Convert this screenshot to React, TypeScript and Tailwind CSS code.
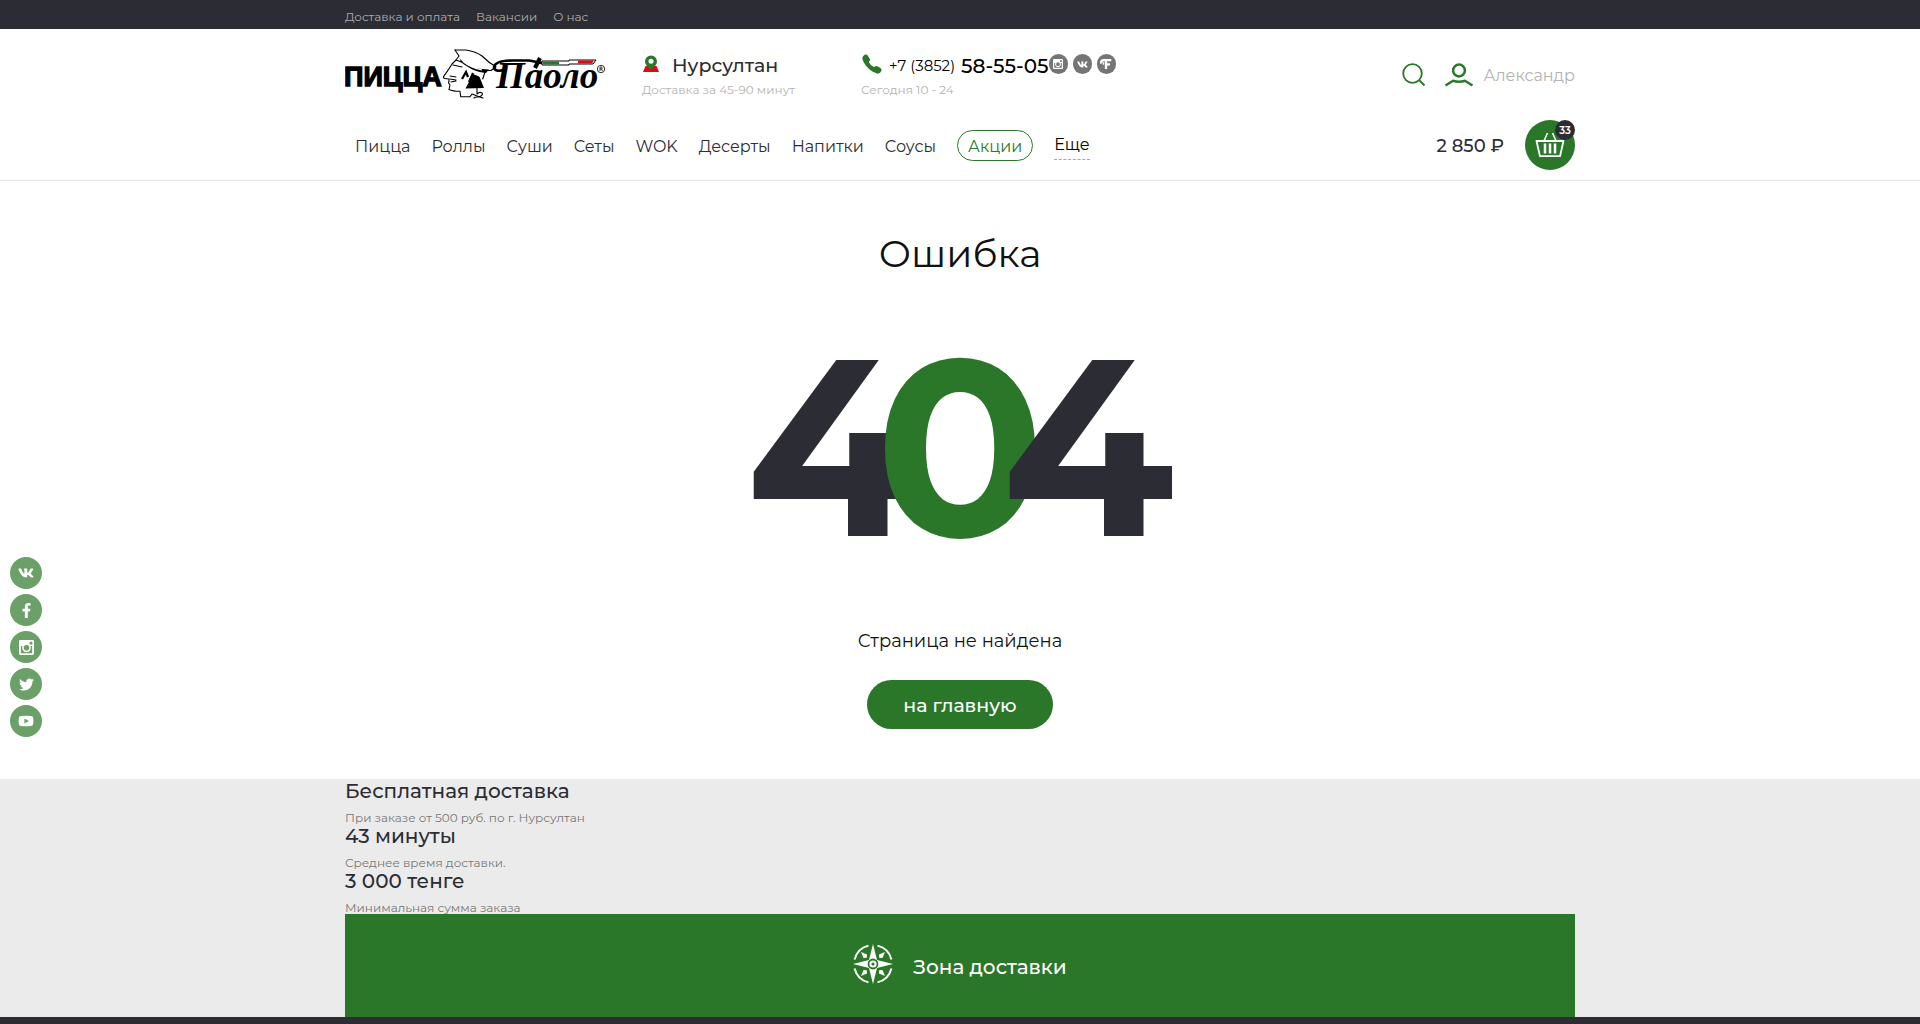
import type { ReactNode } from "react";
import { FaFacebookF, FaTwitter, FaVk } from "react-icons/fa";
import { IoCall } from "react-icons/io5";

function InstagramIcon({ size }: { size: number }) {
  return (
    <svg width={size} height={size} viewBox="0 0 16 16" aria-hidden="true">
      <path
        fillRule="evenodd"
        fill="currentColor"
        d="M1.5 0h13A1.5 1.5 0 0 1 16 1.5v13a1.5 1.5 0 0 1-1.5 1.5h-13A1.5 1.5 0 0 1 0 14.500v-13A1.500 1.500 0 0 1 1.500 0ZM11.300 1.800v3h3v-3ZM2 6.500V14h12V6.500h-1.700a4.700 4.700 0 1 1-8.600 0ZM8 5.200a3 3 0 1 0 0 6 3 3 0 0 0 0-6Z"
      />
    </svg>
  );
}

function YoutubeIcon() {
  return (
    <svg width="16" height="12" viewBox="0 0 16 12" aria-hidden="true">
      <path
        fillRule="evenodd"
        fill="currentColor"
        d="M3 1Q8 .5 13 1Q15 1.200 15.200 3Q15.600 6 15.200 9Q15 10.800 13 11Q8 11.500 3 11Q1 10.800.8 9Q.4 6 .8 3Q1 1.200 3 1ZM6.400 3.400v5.200L11 6Z"
      />
    </svg>
  );
}

function FlampIcon() {
  return (
    <svg width="12" height="11" viewBox="0 0 12 11" aria-hidden="true">
      <path
        d="M1.500 4.500C.5 2.500 1.800 1.200 4 1.200H11.300M6 1.500V10M6 5.400H10"
        stroke="currentColor"
        strokeWidth="2.300"
        fill="none"
      />
      <path d="M3.500 3.200v2.500" stroke="currentColor" strokeWidth="1.500" />
    </svg>
  );
}

function Logo() {
  return (
    <svg width="262" height="54" viewBox="0 0 262 54" role="img" aria-label="Пицца Паоло">
      <text x="-1" y="38" fontFamily="'Liberation Sans', sans-serif" fontSize="27" fontWeight="700" stroke="#000" strokeWidth="1.300">
        ПИЦЦА
      </text>
      <path d="M107 16L98 29L104 32L105 42L115 43L126 46L138 40L141 22L112 11Z" fill="#fff" />
      <g fill="none" stroke="#000" strokeWidth="1.100" strokeLinejoin="round" strokeLinecap="round">
        <path d="M110 2H121C128 3 133 5 137 8C142 13 146 16 151 18.700L146 22.500H142" fill="#fff" />
        <path d="M110 2L114 8L111 12L107 16C104 21 101 25 98.300 29C98 30.500 101 31 104 31L104 33L103.500 35L105 37L104 41.500C107 43 111 43.300 115 43.300L115.700 48.700H125L127 46L134 48.700L138 50" />
        <path d="M111 12L119 15M108 17L117 19M105 28L111 29M105 31L111 32M106 34L111 33" />
        <path d="M132 40V46C135 43 140 45 136 48C133 50 131 48 129 50M140 24L137.700 31" />
      </g>
      <path d="M113 6C114 13 124 19 131 20.500L144 21.500L141 25C131 24 123 20 116 14Z" fill="#000" />
      <path d="M118 13.500C123 17.500 130 20.500 137 22" stroke="#fff" strokeWidth="1.200" fill="none" />
      <path d="M128 26C131 28 134 27 135 30L139 40L120.500 40.500L124 34Z" fill="#000" />
      <path d="M117 31L121 24L123 29M124 34L128 25" stroke="#000" strokeWidth="2.200" fill="none" />
      <text x="151" y="40" fontFamily="'Liberation Serif', serif" fontSize="37" fontStyle="italic" fontWeight="700">
        Паоло
      </text>
      <path d="M161 21C154 24 149 23 149 19C150 14 158 12.500 168 12.500H184C190 13 192 15 198 15" stroke="#000" strokeWidth="2.600" fill="none" strokeLinecap="round" />
      <path d="M190 20L195 10" stroke="#000" strokeWidth="4" />
      <path d="M197 13H224V12H251L248 16H224V17H197Z" fill="#fff" stroke="#000" strokeWidth="1" />
      <path d="M198 13.500H214V16.500H198Z" fill="#2b7729" />
      <path d="M233 12.500H249L247 15.500H233Z" fill="#e30613" />
      <circle cx="256" cy="21" r="3.700" fill="none" stroke="#000" strokeWidth=".8" />
      <path d="M255 23V19H256.500Q258 20 256.500 21H255M256.500 21L257.500 23" fill="none" stroke="#000" strokeWidth=".8" />
    </svg>
  );
}

function PinIcon() {
  return (
    <svg width="18" height="18" viewBox="0 0 18 18" aria-hidden="true">
      <path d="M3.500 11H14.500L17 17H1Z" fill="#e30613" />
      <path d="M9 .5A6 6 0 0 0 3 6.500C3 9.500 6 12 9 15C12 12 15 9.500 15 6.500A6 6 0 0 0 9 .5Z" fill="#2b7729" />
      <circle cx="9" cy="6.200" r="2.500" fill="#fff" />
    </svg>
  );
}

function SearchIcon() {
  return (
    <svg width="24" height="24" viewBox="0 0 24 24" fill="none" stroke="#2b7729" strokeWidth="1.800" aria-hidden="true">
      <circle cx="10.500" cy="10.500" r="9.300" />
      <path d="M17 17L22.500 22.500" />
    </svg>
  );
}

function UserIcon() {
  return (
    <svg width="30" height="24" viewBox="0 0 30 24" fill="none" stroke="#2b7729" aria-hidden="true">
      <circle cx="15" cy="7.500" r="5.900" strokeWidth="2.500" />
      <path d="M1.500 22.500L9 17.800Q15 19.800 21 17.800L28.500 22.500" strokeWidth="2.500" />
    </svg>
  );
}

function BasketIcon() {
  return (
    <svg width="30" height="26" viewBox="0 0 30 26" fill="none" stroke="#fff" aria-hidden="true">
      <path d="M1.500 9H28.500L25 24.200H5Z" strokeWidth="1.800" strokeLinejoin="round" />
      <path d="M8.500 10L12.500 1M21.500 10L17.500 1" strokeWidth="1.500" />
      <path d="M10 11.500V21.500M15 11.500V21.500M20 11.500V21.500" strokeWidth="2.500" />
    </svg>
  );
}

function CompassIcon() {
  return (
    <svg width="40" height="40" viewBox="0 0 40 40" fill="#fff" aria-hidden="true">
      <g fill="none" stroke="#fff" strokeWidth="2">
        <path d="M24.500 1.600A19 19 0 0 1 38.400 15.500M38.400 24.500A19 19 0 0 1 24.500 38.400M15.500 38.400A19 19 0 0 1 1.600 24.500M1.600 15.500A19 19 0 0 1 15.500 1.600" />
      </g>
      <path d="M20 0L24 16L40 20L24 24L20 40L16 24L0 20L16 16Z" />
      <path d="M8 8L14 10.500L13.800 13.800L10.500 14ZM32 8L26 10.500L26.200 13.800L29.500 14ZM8 32L14 29.500L13.800 26.200L10.500 26ZM32 32L26 29.500L26.200 26.200L29.500 26Z" />
      <circle cx="20" cy="20" r="4.500" fill="none" stroke="#2b7729" strokeWidth="1.800" />
      <circle cx="20" cy="20" r="1.600" fill="#2b7729" />
    </svg>
  );
}

const categories = ["Пицца", "Роллы", "Суши", "Сеты", "WOK", "Десерты", "Напитки", "Соусы"];

const facts = [
  { title: "Бесплатная доставка", note: "При заказе от 500 руб. по г. Нурсултан" },
  { title: "43 минуты", note: "Среднее время доставки." },
  { title: "3 000 тенге", note: "Минимальная сумма заказа" },
];

const shareLinks: { name: string; icon: ReactNode }[] = [
  { name: "ВКонтакте", icon: <FaVk size={16} /> },
  { name: "Facebook", icon: <FaFacebookF size={15} /> },
  { name: "Instagram", icon: <InstagramIcon size={15} /> },
  { name: "Twitter", icon: <FaTwitter size={15} /> },
  { name: "YouTube", icon: <YoutubeIcon /> },
];

const headerLinks: { name: string; icon: ReactNode }[] = [
  { name: "Instagram", icon: <InstagramIcon size={10} /> },
  { name: "ВКонтакте", icon: <FaVk size={11} /> },
  { name: "Flamp", icon: <FlampIcon /> },
];

export default function App() {
  return (
    <div className="flex min-h-screen flex-col bg-white font-['Montserrat','Inter',sans-serif] text-[#2c2c34]">
      <div className="bg-[#2c2c34]">
        <nav className="mx-auto flex h-[29px] w-full max-w-[1230px] items-center gap-4 pt-1 text-[12px] text-[#adadad]">
          <a href="#delivery">Доставка и оплата</a>
          <a href="#jobs">Вакансии</a>
          <a href="#about">О нас</a>
        </nav>
      </div>

      <header className="border-b border-[#e6e6e6]">
        <div className="mx-auto w-full max-w-[1230px]">
          <div className="flex h-[91px] items-start pt-[19px]">
            <a href="#home" className="w-[297px]">
              <Logo />
            </a>
            <div className="w-[219px]">
              <a href="#city" className="flex h-8 items-center gap-3 text-[19px] font-medium">
                <PinIcon />
                <span className="pt-1">Нурсултан</span>
              </a>
              <p className="pt-0.5 text-[12px] leading-4 text-[#b3b3b3]">Доставка за 45-90 минут</p>
            </div>
            <div>
              <div className="flex h-8 items-center">
                <a href="tel:+73852585505" className="flex items-center text-black">
                  <IoCall size={22} color="#2b7729" />
                  <span className="ml-1.5 pt-1 text-[15px]">+7 (3852)</span>
                  <span className="ml-1.5 pt-1 text-[20px] font-medium">58-55-05</span>
                </a>
                <div className="flex gap-[5px]">
                  {headerLinks.map((link) => (
                    <a key={link.name} href="#social" aria-label={link.name} className="flex h-5 w-[19px] items-center justify-center rounded-full bg-[#757573] text-white">
                      {link.icon}
                    </a>
                  ))}
                </div>
              </div>
              <p className="pt-0.5 text-[12px] leading-4 text-[#b3b3b3]">Сегодня 10 - 24</p>
            </div>
            <div className="ml-auto flex h-[54px] items-center">
              <button type="button" aria-label="Поиск">
                <SearchIcon />
              </button>
              <a href="#profile" className="ml-[18px] flex items-center gap-2.5 text-[16px] text-[#b3b3b3]">
                <UserIcon />
                <span className="pt-0.5">Александр</span>
              </a>
            </div>
          </div>

          <div className="flex h-[60px] items-start">
            <nav className="flex h-[51px] items-center gap-[21px] pl-2.5 text-[16px]">
              {categories.map((category) => (
                <a key={category} href="#menu" className="pt-0.5">
                  {category}
                </a>
              ))}
              <a href="#promo" className="flex h-[31px] items-center rounded-full border border-[#2b7729] px-2.5 pt-0.5 text-[#2b7729]">
                Акции
              </a>
              <button type="button" className="border-b border-dashed border-[#a6a6a6] pt-0.5 pb-0.5 text-black">
                Еще
              </button>
            </nav>
            <div className="ml-auto flex items-center gap-[21px]">
              <span className="pt-0.5 text-[18px] font-medium">2 850 ₽</span>
              <button type="button" aria-label="Корзина" className="relative flex size-[50px] items-center justify-center rounded-full bg-[#2b7729]">
                <BasketIcon />
                <span className="absolute top-0 right-0 flex size-5 items-center justify-center rounded-full bg-[#2c2c34] text-[10px] font-semibold text-white">
                  33
                </span>
              </button>
            </div>
          </div>
        </div>
      </header>

      <main className="flex flex-col items-center pt-[49px] pb-[50px] text-[#111]">
        <h1 className="text-[38px] leading-[48px]">Ошибка</h1>
        <p aria-label="404" className="mt-[49px] flex text-[250px] leading-[240px] font-bold">
          <span className="text-[#2c2c34]">4</span>
          <span className="-ml-[43px] text-[#2b7729]">0</span>
          <span className="-ml-[43px] text-[#2c2c34]">4</span>
        </p>
        <p className="mt-[62px] text-[18px] leading-6">Страница не найдена</p>
        <a href="#home" className="mt-[27px] flex h-[49px] items-center rounded-full bg-[#2b7729] px-9 pt-1 text-[19px] font-medium text-white">
          на главную
        </a>
      </main>

      <section className="bg-[#ebebeb]">
        <div className="mx-auto w-full max-w-[1230px]">
          {facts.map((fact) => (
            <div key={fact.title} className="h-[45px]">
              <h2 className="text-[20px] leading-6 font-medium">{fact.title}</h2>
              <p className="pt-[7px] text-[12px] leading-4 text-[#777]">{fact.note}</p>
            </div>
          ))}
          <a href="#zone" className="flex h-[103px] items-center justify-center gap-5 bg-[#2b7729] pb-1 text-[20px] font-medium text-white">
            <CompassIcon />
            <span className="pt-1.5">Зона доставки</span>
          </a>
        </div>
      </section>

      <footer className="min-h-[7px] flex-1 bg-[#2c2c34]" />

      <nav aria-label="Социальные сети" className="fixed top-[557px] left-2.5 flex flex-col gap-[5px]">
        {shareLinks.map((link) => (
          <a key={link.name} href="#social" aria-label={link.name} className="flex size-8 items-center justify-center rounded-full bg-[#6ba069] text-white">
            {link.icon}
          </a>
        ))}
      </nav>
    </div>
  );
}
